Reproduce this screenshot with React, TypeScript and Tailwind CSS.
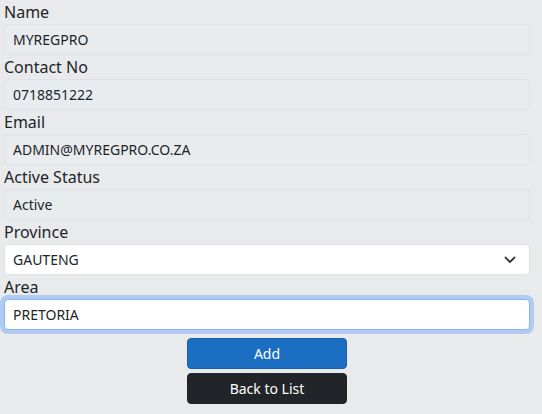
import React from 'react';

const fields = [
  { label: 'Name', value: 'MYREGPRO' },
  { label: 'Contact No', value: '0718851222' },
  { label: 'Email', value: 'ADMIN@MYREGPRO.CO.ZA' },
  { label: 'Active Status', value: 'Active' },
];

export default function App() {
  return (
    <div className="min-h-screen w-full bg-[#e9eaec] text-[#212529]" style={{ fontFamily: '"Noto Sans", sans-serif' }}>
      <div className="w-[526px] ml-[4px] flex flex-col">
        {fields.map(f => (
          <div key={f.label} className="flex flex-col">
            <label className="text-[16px] leading-[24px]">{f.label}</label>
            <input
              disabled
              value={f.value}
              readOnly
              className="h-[31px] w-full rounded-[4px] border border-[#dee2e6] bg-[#e9ecef] px-2 text-[14px] text-[#212529] outline-none"
            />
          </div>
        ))}

        <div className="flex flex-col">
          <label className="text-[16px] leading-[24px]">Province</label>
          <div className="relative">
            <select className="h-[31px] w-full appearance-none rounded-[4px] border border-[#dee2e6] bg-white px-2 text-[14px] text-[#212529] outline-none">
              <option>GAUTENG</option>
            </select>
            <svg className="pointer-events-none absolute right-[14px] top-1/2 -translate-y-1/2" width="12" height="8" viewBox="0 0 12 8" fill="none">
              <path d="M1.5 1.5 6 6l4.5-4.5" stroke="#343a40" strokeWidth="1.8" strokeLinecap="round" strokeLinejoin="round" />
            </svg>
          </div>
        </div>

        <div className="flex flex-col">
          <label className="text-[16px] leading-[24px]">Area</label>
          <input
            value="PRETORIA"
            readOnly
            className="h-[31px] w-full rounded-[4px] border border-[#86b7fe] bg-white px-2 text-[14px] text-[#212529] outline-none shadow-[0_0_0_4px_rgba(13,110,253,0.25)]"
          />
        </div>

        <div className="mt-[8px] flex flex-col items-center gap-[4px]">
          <button className="h-[31px] w-[160px] rounded-[4px] border border-[#1861ac] bg-[#1b6ec2] text-[14px] text-white">Add</button>
          <button className="h-[31px] w-[160px] rounded-[4px] border border-[#212529] bg-[#212529] text-[14px] text-white">Back to List</button>
        </div>
      </div>
    </div>
  );
}
